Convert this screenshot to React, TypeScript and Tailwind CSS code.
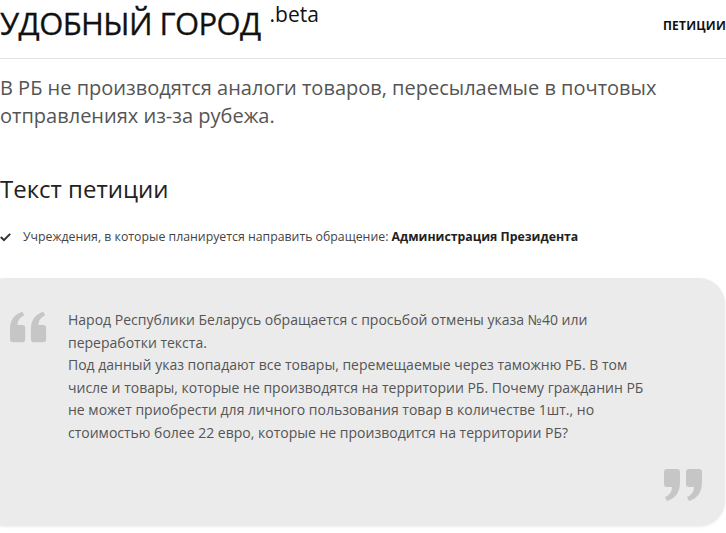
import React from "react";

function QuoteOpen({ className }: { className?: string }) {
  return (
    <svg viewBox="0 0 40 32" className={className} fill="currentColor">
      <path d="M0 29V19C0 9 4 3 13 0l2 4C10 6 8 10 8 14h5a3 3 0 0 1 3 3v12a3 3 0 0 1-3 3H3a3 3 0 0 1-3-3z" />
      <path d="M22 29V19c0-10 4-16 13-19l2 4c-5 2-7 6-7 10h5a3 3 0 0 1 3 3v12a3 3 0 0 1-3 3H25a3 3 0 0 1-3-3z" />
    </svg>
  );
}

function QuoteClose({ className }: { className?: string }) {
  return (
    <svg viewBox="0 0 40 32" className={className} fill="currentColor">
      <path d="M18 3v10c0 10-4 16-13 19l-2-4c5-2 7-6 7-10H5a3 3 0 0 1-3-3V3a3 3 0 0 1 3-3h10a3 3 0 0 1 3 3z" />
      <path d="M40 3v10c0 10-4 16-13 19l-2-4c5-2 7-6 7-10h-5a3 3 0 0 1-3-3V3a3 3 0 0 1 3-3h10a3 3 0 0 1 3 3z" />
    </svg>
  );
}

export default function App() {
  return (
    <div className="w-[726px] h-[533px] overflow-hidden bg-white font-['Open_Sans',sans-serif] text-[#222]">
      {/* Header */}
      <header className="flex items-start justify-between h-[59px] border-b border-[#e3e3e3]">
        <div className="flex items-start pt-[3px]">
          <h1 className="text-[31px] leading-[40px] text-[#111] tracking-[-0.6px] [-webkit-text-stroke:0.3px_#111]">
            УДОБНЫЙ ГОРОД
          </h1>
          <span className="ml-[9px] text-[21px] leading-[24px] text-[#111] -mt-[1px]">.beta</span>
        </div>
        <nav className="pt-[12px]">
          <a className="text-[12px] font-bold text-[#111] tracking-[0.2px]">ПЕТИЦИИ</a>
        </nav>
      </header>

      {/* Title */}
      <p className="mt-[15px] text-[20px] leading-[28px] text-[#555] pr-[60px]">
        В РБ не производятся аналоги товаров, пересылаемые в почтовых отправлениях из-за рубежа.
      </p>

      <h2 className="mt-[43px] text-[24px] leading-[32px] text-[#222]">Текст петиции</h2>

      <div className="mt-[23px] flex items-center gap-[12px] text-[12.3px] text-[#444]">
        <svg viewBox="0 0 12 10" className="w-[11px] h-[9px] text-[#333]" fill="currentColor">
          <path d="M0 5.2l1.6-1.6L4.3 6.3 10.4 0.2 12 1.8 4.3 9.5z" />
        </svg>
        <span>
          Учреждения, в которые планируется направить обращение:{" "}
          <b className="font-bold text-[#222]">Администрация Президента</b>
        </span>
      </div>

      {/* Petition text */}
      <div className="relative mt-[32px] -ml-[20px] w-[745px] h-[248px] rounded-[26px] bg-[#ebebeb] shadow-[0_1px_3px_rgba(0,0,0,0.08)]">
        <QuoteOpen className="absolute left-[30px] top-[33px] w-[38px] h-[32px] text-[#c6c6c6]" />
        <div className="pl-[88px] pt-[31px] w-[672px] text-[14px] leading-[22.5px] text-[#555]">
          <p>Народ Республики Беларусь обращается с просьбой отмены указа №40 или переработки текста.</p>
          <p>
            Под данный указ попадают все товары, перемещаемые через таможню РБ. В том числе и товары, которые не
            производятся на территории РБ. Почему гражданин РБ не может приобрести для личного пользования товар в
            количестве 1шт., но стоимостью более 22 евро, которые не производится на территории РБ?
          </p>
        </div>
        <QuoteClose className="absolute left-[682px] top-[191px] w-[40px] h-[32px] text-[#c6c6c6]" />
      </div>
    </div>
  );
}
